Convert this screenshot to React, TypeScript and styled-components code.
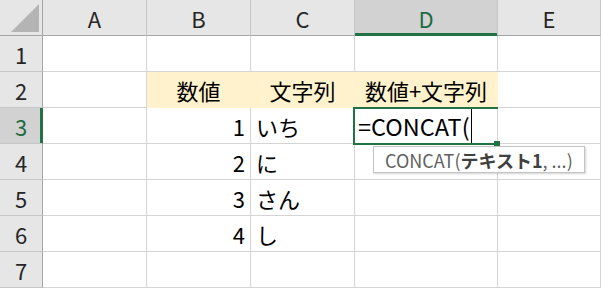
import React from 'react';
import styled, { createGlobalStyle, css } from 'styled-components';

const GlobalStyle = createGlobalStyle`
  html, body { margin: 0; padding: 0; background: #ffffff; }
  body { font-family: "Noto Sans CJK JP", "Noto Sans", sans-serif; }
`;

const FONT = `"Noto Sans CJK JP", "Noto Sans", sans-serif`;
const GREEN = '#217346';

const Sheet = styled.div`
  display: grid;
  grid-template-columns: 43px 104px 104px 104px 143px 103px;
  grid-template-rows: repeat(8, 36px);
  width: 601px;
  height: 288px;
  overflow: hidden;
  font-family: ${FONT};
  font-size: 22px;
  color: #000;
`;

const Corner = styled.div`
  box-sizing: border-box;
  background: #e6e6e6;
  border-right: 1px solid #a6a6a6;
  border-bottom: 1px solid #a6a6a6;
  display: flex;
  align-items: flex-start;
  justify-content: flex-start;
  padding: 4px 0 0 11px;
`;

const ColHeader = styled.div<{ $active?: boolean }>`
  box-sizing: border-box;
  background: #e6e6e6;
  border-right: 1px solid #c6c6c6;
  border-bottom: 1px solid #a6a6a6;
  display: flex;
  align-items: center;
  justify-content: center;
  color: #262626;
  ${(p) =>
    p.$active &&
    css`
      background: #d2d2d2;
      color: #1e6b43;
      border-bottom-color: ${GREEN};
      box-shadow: inset 0 -2px 0 ${GREEN};
    `}
`;

const RowHeader = styled.div<{ $active?: boolean }>`
  box-sizing: border-box;
  background: #e6e6e6;
  border-right: 1px solid #a6a6a6;
  border-bottom: 1px solid #c6c6c6;
  display: flex;
  align-items: center;
  justify-content: center;
  color: #262626;
  ${(p) =>
    p.$active &&
    css`
      background: #d2d2d2;
      color: #1e6b43;
      border-right-color: ${GREEN};
      box-shadow: inset -2px 0 0 ${GREEN};
    `}
`;

const Cell = styled.div<{ $align?: 'left' | 'right' | 'center'; $fill?: string }>`
  box-sizing: border-box;
  position: relative;
  border-right: 1px solid #d4d4d4;
  border-bottom: 1px solid #d4d4d4;
  display: flex;
  align-items: center;
  white-space: nowrap;
  padding: 0 5px;
  justify-content: ${(p) =>
    p.$align === 'right' ? 'flex-end' : p.$align === 'center' ? 'center' : 'flex-start'};
  ${(p) =>
    p.$fill &&
    css`
      background: ${p.$fill};
      border-bottom-color: ${p.$fill};
      border-right-color: ${p.$fill};
    `}
`;

const EditCell = styled(Cell)`
  z-index: 2;
  overflow: visible;
  padding-left: 3px;
  font-size: 23.5px;
`;

const ActiveFrame = styled.div`
  position: absolute;
  left: -2px;
  top: -1px;
  right: -1px;
  bottom: -2px;
  border-left: 2px solid ${GREEN};
  border-top: 2px solid ${GREEN};
  border-bottom: 2px solid ${GREEN};
  pointer-events: none;
`;

const FillHandle = styled.div`
  position: absolute;
  right: -3px;
  bottom: -4px;
  width: 6px;
  height: 6px;
  background: ${GREEN};
`;

const Caret = styled.span`
  display: inline-block;
  width: 1px;
  height: 35px;
  background: #000;
  margin-left: 1px;
  align-self: stretch;
`;

const Tooltip = styled.div`
  position: absolute;
  left: 18px;
  top: 38px;
  box-sizing: border-box;
  width: 212px;
  height: 27px;
  background: #fff;
  border: 1px solid #c3c3c3;
  box-shadow: 1px 1px 2px rgba(0, 0, 0, 0.18);
  display: flex;
  align-items: center;
  padding-left: 11px;
  font-size: 18px;
  color: #5f5f5f;
  white-space: nowrap;
  z-index: 3;
`;

const Strong = styled.b`
  font-weight: 700;
  color: #404040;
`;

const YELLOW = '#fff2cc';

const cols = ['A', 'B', 'C', 'D', 'E'];

export default function App() {
  const rowNums = [1, 2, 3, 4, 5, 6, 7];
  const nums: Record<number, string> = { 3: '1', 4: '2', 5: '3', 6: '4' };
  const texts: Record<number, string> = { 3: 'いち', 4: 'に', 5: 'さん', 6: 'し' };

  return (
    <>
      <GlobalStyle />
      <Sheet>
        <Corner>
          <svg width="28" height="28" viewBox="0 0 28 28">
            <polygon points="28,0 28,28 0,28" fill="#b4b4b4" />
          </svg>
        </Corner>
        {cols.map((c) => (
          <ColHeader key={c} $active={c === 'D'}>
            {c}
          </ColHeader>
        ))}
        {rowNums.map((n) => (
          <React.Fragment key={n}>
            <RowHeader $active={n === 3}>{n}</RowHeader>
            <Cell />
            {n === 2 ? (
              <>
                <Cell $align="center" $fill={YELLOW}>数値</Cell>
                <Cell $align="center" $fill={YELLOW}>文字列</Cell>
                <Cell $align="center" $fill={YELLOW}>数値+文字列</Cell>
              </>
            ) : (
              <>
                <Cell $align="right">{nums[n]}</Cell>
                <Cell $align="left">{texts[n]}</Cell>
                {n === 3 ? (
                  <EditCell $align="left">
                    =CONCAT(
                    <Caret />
                    <ActiveFrame />
                    <FillHandle />
                    <Tooltip>
                      CONCAT(<Strong>テキスト1</Strong>, ...)
                    </Tooltip>
                  </EditCell>
                ) : (
                  <Cell />
                )}
              </>
            )}
            <Cell />
          </React.Fragment>
        ))}
      </Sheet>
    </>
  );
}
